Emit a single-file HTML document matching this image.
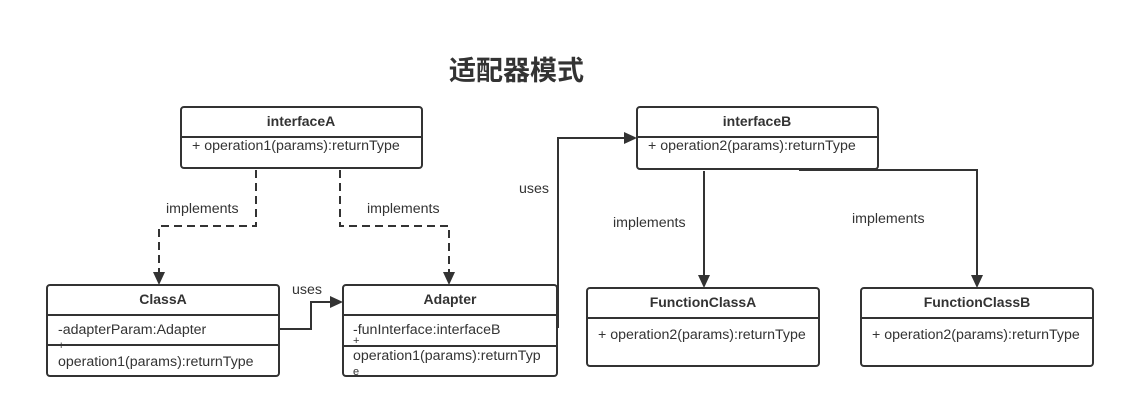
<!DOCTYPE html>
<html><head><meta charset="utf-8"><style>
html,body{margin:0;padding:0;background:#fff;}
svg{display:block}
text{font-family:"Liberation Sans","Noto Sans CJK SC",sans-serif;fill:#333;font-size:14.2px}
.b{font-weight:bold;font-size:14px}
</style></head><body>
<svg width="1125" height="408" xmlns="http://www.w3.org/2000/svg">
<rect width="1125" height="408" fill="#fff"/>
<text x="449" y="80" style="font-size:27px;font-weight:bold;font-family:'Noto Sans CJK SC',sans-serif" fill="#222">适配器模式</text>
<g fill="none" stroke="#333" stroke-width="2">
<rect x="181" y="107" width="241" height="61" rx="3"/><line x1="181" y1="137" x2="422" y2="137"/>
<rect x="637" y="107" width="241" height="62" rx="3"/><line x1="637" y1="137" x2="878" y2="137"/>
<rect x="47" y="285" width="232" height="91" rx="3"/><line x1="47" y1="315" x2="279" y2="315"/><line x1="47" y1="345" x2="279" y2="345"/>
<rect x="343" y="285" width="214" height="91" rx="3"/><line x1="343" y1="315" x2="557" y2="315"/><line x1="343" y1="346" x2="557" y2="346"/>
<rect x="587" y="288" width="232" height="78" rx="3"/><line x1="587" y1="318" x2="819" y2="318"/>
<rect x="861" y="288" width="232" height="78" rx="3"/><line x1="861" y1="318" x2="1093" y2="318"/>
<path d="M256 170V226H159V272" stroke-dasharray="8,5"/>
<path d="M340 170V226H449V272" stroke-dasharray="8,5"/>
<path d="M279 329H311V302H330"/>
<path d="M558 328V138H624"/>
<path d="M704 171V275"/>
<path d="M799 170H977V275"/>
</g>
<g fill="#333">
<path d="M153 272h12l-6 13z"/><path d="M443 272h12l-6 13z"/>
<path d="M330 296v12l13-6z"/><path d="M624 132v12l13-6z"/>
<path d="M698 275h12l-6 13z"/><path d="M971 275h12l-6 13z"/>
</g>
<text class="b" x="301" y="126" text-anchor="middle">interfaceA</text>
<text x="192" y="150">+ operation1(params):returnType</text>
<text class="b" x="757" y="126" text-anchor="middle">interfaceB</text>
<text x="648" y="150">+ operation2(params):returnType</text>
<text class="b" x="163" y="304" text-anchor="middle">ClassA</text>
<text x="58" y="334">-adapterParam:Adapter</text>
<text x="58" y="349" style="font-size:11px">+</text>
<text x="58" y="366">operation1(params):returnType</text>
<text class="b" x="450" y="304" text-anchor="middle">Adapter</text>
<text x="353" y="334">-funInterface:interfaceB</text>
<text x="353" y="344" style="font-size:11px">+</text>
<text x="353" y="360">operation1(params):returnTyp</text>
<text x="353" y="375" style="font-size:11px">e</text>
<text class="b" x="703" y="307" text-anchor="middle">FunctionClassA</text>
<text x="598" y="339">+ operation2(params):returnType</text>
<text class="b" x="977" y="307" text-anchor="middle">FunctionClassB</text>
<text x="872" y="339">+ operation2(params):returnType</text>
<text x="166" y="213">implements</text>
<text x="367" y="213">implements</text>
<text x="613" y="227">implements</text>
<text x="852" y="223">implements</text>
<text x="519" y="193">uses</text>
<text x="292" y="294">uses</text>
</svg>
</body></html>
